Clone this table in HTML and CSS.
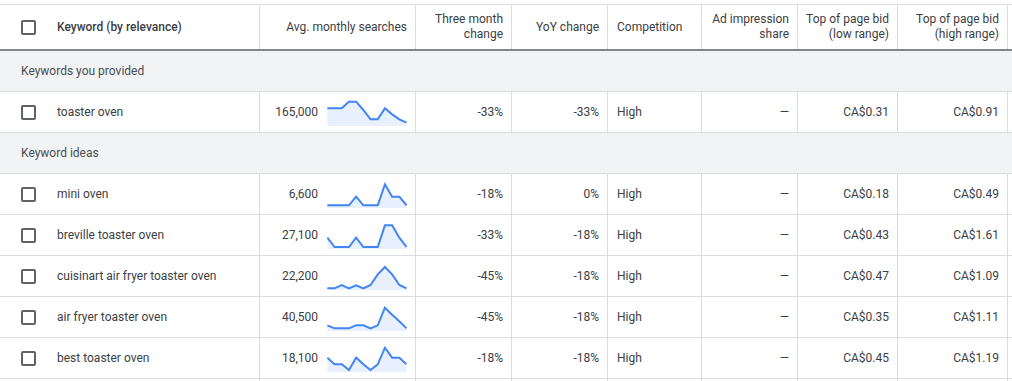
FILE: index.html
```html
<!DOCTYPE html>
<html>
<head>
<meta charset="utf-8">
<link rel="stylesheet" href="styles.css">
</head>
<body>
<div class="table">
  <div class="row head">
    <div class="cell kw"><span class="cb"></span><span class="strong">Keyword (by relevance)</span></div>
    <div class="cell r">Avg. monthly searches</div>
    <div class="cell r">Three month<br>change</div>
    <div class="cell r">YoY change</div>
    <div class="cell l">Competition</div>
    <div class="cell r">Ad impression<br>share</div>
    <div class="cell r">Top of page bid<br>(low range)</div>
    <div class="cell r">Top of page bid<br>(high range)</div>
    <div class="cell last"></div>
  </div>

  <div class="group">Keywords you provided</div>

  <div class="row">
    <div class="cell kw"><span class="cb"></span>toaster oven</div>
    <div class="cell r"><span class="n">165,000</span><svg class="spark" viewBox="0 0 240 84"><polygon class="area" points="1,31 22.6,31 44.2,31 65.8,11 87.4,11 109,36 130.6,64 152.2,64 173.8,31 195.4,49 217,64 238.6,74 238.6,84 1,84"/><polyline class="line" points="1,31 22.6,31 44.2,31 65.8,11 87.4,11 109,36 130.6,64 152.2,64 173.8,31 195.4,49 217,64 238.6,74"/></svg></div>
    <div class="cell r">-33%</div>
    <div class="cell r">-33%</div>
    <div class="cell l">High</div>
    <div class="cell r"><span class="dash">—</span></div>
    <div class="cell r">CA$0.31</div>
    <div class="cell r">CA$0.91</div>
    <div class="cell last"></div>
  </div>

  <div class="group">Keyword ideas</div>

  <div class="row">
    <div class="cell kw"><span class="cb"></span>mini oven</div>
    <div class="cell r"><span class="n">6,600</span><svg class="spark" viewBox="0 0 240 84"><polygon class="area" points="1,76 22.6,76 44.2,76 65.8,76 87.4,50 109,76 130.6,76 152.2,76 173.8,13 195.4,50 217,50 238.6,76 238.6,84 1,84"/><polyline class="line" points="1,76 22.6,76 44.2,76 65.8,76 87.4,50 109,76 130.6,76 152.2,76 173.8,13 195.4,50 217,50 238.6,76"/></svg></div>
    <div class="cell r">-18%</div>
    <div class="cell r">0%</div>
    <div class="cell l">High</div>
    <div class="cell r"><span class="dash">—</span></div>
    <div class="cell r">CA$0.18</div>
    <div class="cell r">CA$0.49</div>
    <div class="cell last"></div>
  </div>

  <div class="row">
    <div class="cell kw"><span class="cb"></span>breville toaster oven</div>
    <div class="cell r"><span class="n">27,100</span><svg class="spark" viewBox="0 0 240 84"><polygon class="area" points="1,50 22.6,78 44.2,78 65.8,78 87.4,50 109,78 130.6,78 152.2,78 173.8,13 195.4,13 217,50 238.6,78 238.6,84 1,84"/><polyline class="line" points="1,50 22.6,78 44.2,78 65.8,78 87.4,50 109,78 130.6,78 152.2,78 173.8,13 195.4,13 217,50 238.6,78"/></svg></div>
    <div class="cell r">-33%</div>
    <div class="cell r">-18%</div>
    <div class="cell l">High</div>
    <div class="cell r"><span class="dash">—</span></div>
    <div class="cell r">CA$0.43</div>
    <div class="cell r">CA$1.61</div>
    <div class="cell last"></div>
  </div>

  <div class="row">
    <div class="cell kw"><span class="cb"></span>cuisinart air fryer toaster oven</div>
    <div class="cell r"><span class="n">22,200</span><svg class="spark" viewBox="0 0 240 84"><polygon class="area" points="1,79 22.6,79 44.2,69 65.8,79 87.4,70 109,79 130.6,69 152.2,37 173.8,15 195.4,37 217,69 238.6,79 238.6,84 1,84"/><polyline class="line" points="1,79 22.6,79 44.2,69 65.8,79 87.4,70 109,79 130.6,69 152.2,37 173.8,15 195.4,37 217,69 238.6,79"/></svg></div>
    <div class="cell r">-45%</div>
    <div class="cell r">-18%</div>
    <div class="cell l">High</div>
    <div class="cell r"><span class="dash">—</span></div>
    <div class="cell r">CA$0.47</div>
    <div class="cell r">CA$1.09</div>
    <div class="cell last"></div>
  </div>

  <div class="row">
    <div class="cell kw"><span class="cb"></span>air fryer toaster oven</div>
    <div class="cell r"><span class="n">40,500</span><svg class="spark" viewBox="0 0 240 84"><polygon class="area" points="1,67 22.6,76 44.2,76 65.8,76 87.4,67 109,67 130.6,76 152.2,67 173.8,14 195.4,35 217,55 238.6,76 238.6,84 1,84"/><polyline class="line" points="1,67 22.6,76 44.2,76 65.8,76 87.4,67 109,67 130.6,76 152.2,67 173.8,14 195.4,35 217,55 238.6,76"/></svg></div>
    <div class="cell r">-45%</div>
    <div class="cell r">-18%</div>
    <div class="cell l">High</div>
    <div class="cell r"><span class="dash">—</span></div>
    <div class="cell r">CA$0.35</div>
    <div class="cell r">CA$1.11</div>
    <div class="cell last"></div>
  </div>

  <div class="row">
    <div class="cell kw"><span class="cb"></span>best toaster oven</div>
    <div class="cell r"><span class="n">18,100</span><svg class="spark" viewBox="0 0 240 84"><polygon class="area" points="1,41 22.6,61 44.2,61 65.8,78 87.4,41 109,61 130.6,78 152.2,61 173.8,11 195.4,41 217,41 238.6,61 238.6,84 1,84"/><polyline class="line" points="1,41 22.6,61 44.2,61 65.8,78 87.4,41 109,61 130.6,78 152.2,61 173.8,11 195.4,41 217,41 238.6,61"/></svg></div>
    <div class="cell r">-18%</div>
    <div class="cell r">-18%</div>
    <div class="cell l">High</div>
    <div class="cell r"><span class="dash">—</span></div>
    <div class="cell r">CA$0.45</div>
    <div class="cell r">CA$1.19</div>
    <div class="cell last"></div>
  </div>

  <div class="row tail">
    <div class="cell kw"></div>
    <div class="cell r"></div>
    <div class="cell r"></div>
    <div class="cell r"></div>
    <div class="cell l"></div>
    <div class="cell r"></div>
    <div class="cell r"></div>
    <div class="cell r"></div>
    <div class="cell last"></div>
  </div>
</div>
</body>
</html>
```
FILE: styles.css
```css
html, body {
  margin: 0;
  padding: 0;
  background: #ffffff;
}
body {
  width: 1012px;
  height: 381px;
  overflow: hidden;
  font-family: Roboto, "Noto Sans", Arial, sans-serif;
  font-size: 12px;
  color: #3c4043;
}
.table {
  margin-top: 4px;
  border-top: 1px solid #dadce0;
  width: 1012px;
}
.row {
  display: grid;
  grid-template-columns: 260px 156px 96px 96px 94px 96px 100px 110px 1fr;
  height: 41px;
  box-sizing: border-box;
  border-bottom: 1px solid #dadce0;
}
.row.head {
  height: 46px;
  border-bottom: 2px solid #80868b;
}
.row.tail {
  height: 3px;
  border-bottom: none;
}
.cell {
  box-sizing: border-box;
  border-right: 1px solid #dadce0;
  display: flex;
  align-items: center;
  line-height: 15px;
  white-space: nowrap;
}
.cell.last {
  border-right: none;
}
.cell.r {
  justify-content: flex-end;
  text-align: right;
  padding-right: 8px;
}
.cell.l {
  padding-left: 9px;
}
.cell.kw {
  padding-left: 21px;
}
.cb {
  width: 15px;
  height: 15px;
  box-sizing: border-box;
  border: 2px solid #5f6368;
  border-radius: 2px;
  margin-right: 21px;
  flex: none;
}
.strong {
  font-weight: 500;
  color: #3c4043;
}
.group {
  height: 41px;
  box-sizing: border-box;
  border-bottom: 1px solid #dadce0;
  background: #f1f3f4;
  display: flex;
  align-items: center;
  padding-left: 21px;
  color: #4a4e54;
}
.n {
  margin-right: 9px;
}
.dash {
  display: inline-block;
}
.spark {
  width: 80px;
  height: 28px;
  flex: none;
  display: block;
}
.area {
  fill: #e8f0fe;
}
.line {
  fill: none;
  stroke: #4285f4;
  stroke-width: 6;
  stroke-linejoin: miter;
}
```
